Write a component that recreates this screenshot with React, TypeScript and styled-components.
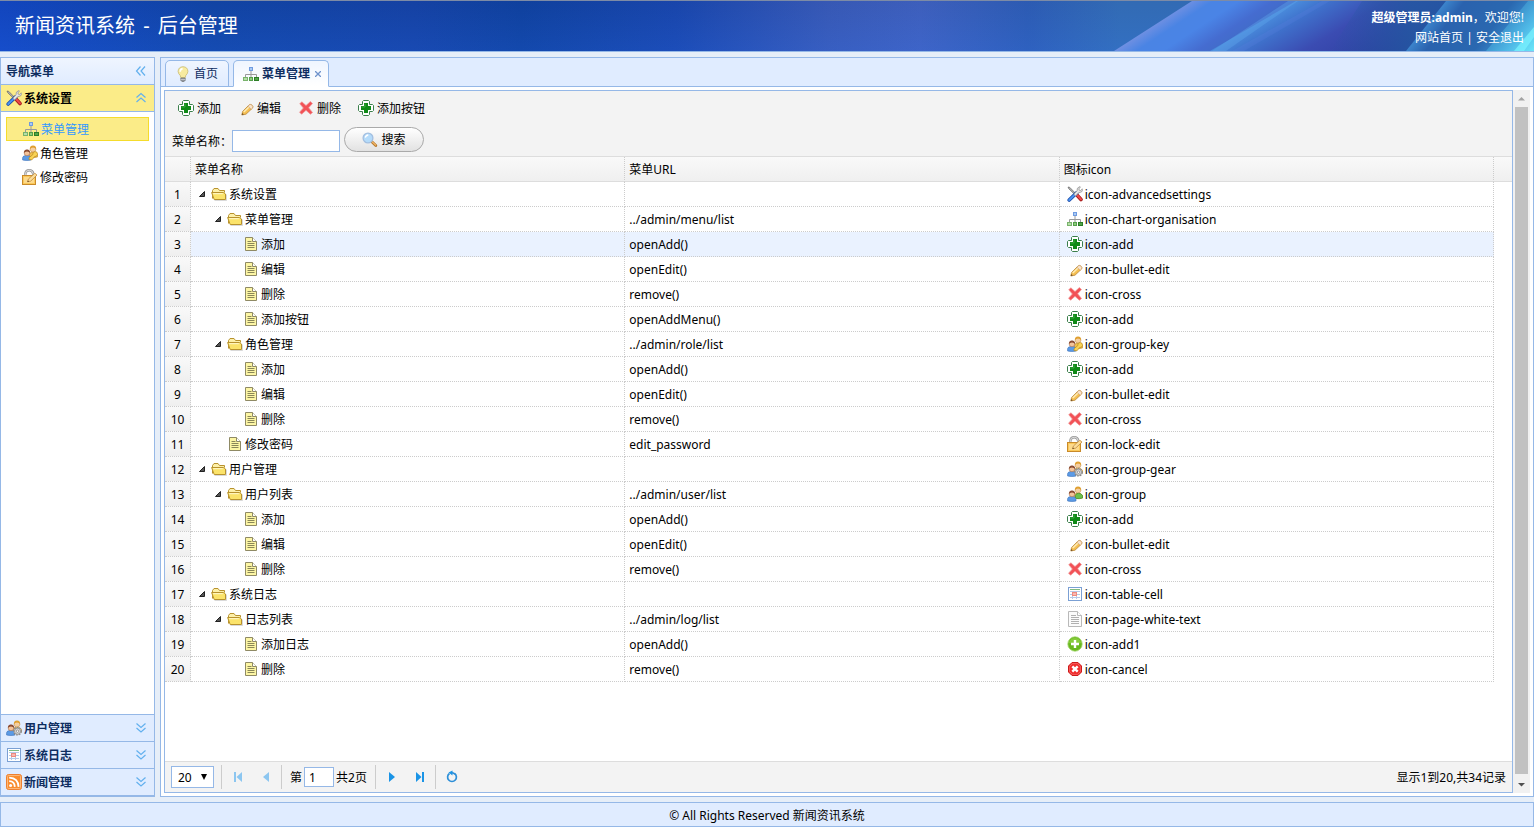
import React, { useState } from "react";
import styled, { createGlobalStyle, css } from "styled-components";

const LINE = "#95b8e7";
const NAVY = "#0e2d5f";

const GlobalStyle = createGlobalStyle`
  *, *::before, *::after { box-sizing: border-box; }
  body {
    margin: 0;
    background: #e6eef8;
    color: #000;
    font: 12px/21px "Noto Sans", "Noto Sans CJK SC", sans-serif;
  }
  button, input, select { font: inherit; color: inherit; }
`;

/* ---------- icons ---------- */

type IconName =
  | "tools" | "org" | "add" | "pencil" | "cross" | "groupKey" | "lockEdit"
  | "groupGear" | "group" | "table" | "page" | "add1" | "cancel" | "folder"
  | "file" | "bulb" | "search" | "rss";

const people = (
  <>
    <path d="M7.500 12.500V9.500Q7.500 7 11 7t4.500 2.500V12q-3 1-8 .5z" fill="#f0c04a" stroke="#c08a2c" strokeWidth=".6" />
    <circle cx="11" cy="4.300" r="2.800" fill="#f6cfa0" stroke="#b8823a" strokeWidth=".5" />
    <path d="M7.800 4.400Q7.600.7 11 .6q3.400.1 3.200 3.800-.9-1.900-3.200-1.900T7.800 4.400z" fill="#e0a030" />
    <path d="M.6 15V12.700Q.8 10.400 4.800 10.400t4.200 2.300V15Q5 16 .6 15z" fill="#5b9be6" stroke="#3a6fb8" strokeWidth=".6" />
    <circle cx="5" cy="8" r="2.800" fill="#f3c39a" stroke="#9a5a34" strokeWidth=".5" />
    <path d="M1.900 8Q1.700 4.500 5 4.400 8.300 4.500 8.100 8 7.200 6.400 5 6.400T1.900 8z" fill="#8a4b32" />
  </>
);

const pencil = (
  <>
    <path d="M3.800 15L4.600 11.400 11 5Q12.600 3.800 14 5.200T14.600 8L8 14.200z" fill="#f5bf52" stroke="#bd8a3c" strokeWidth=".8" />
    <path d="M5.800 12L11.800 6.200" stroke="#fdebb5" strokeWidth="1.500" />
    <path d="M11 5Q12.600 3.800 14 5.200T14.600 8L13.200 9.200 9.900 6.200z" fill="#f9e3cb" stroke="#c79c6a" strokeWidth=".6" />
    <path d="M3.800 15l.5-2 1.500 1.500z" fill="#6b4a24" />
  </>
);

const ART: Record<IconName, React.ReactNode> = {
  tools: (
    <>
      <path d="M9 8L14 13.500" stroke="#a81c1c" strokeWidth="3.600" strokeLinecap="round" />
      <path d="M9.200 8L14 13.300" stroke="#ee4a4a" strokeWidth="2" strokeLinecap="round" />
      <path d="M1 1l1.800.4L9 7.800 8 8.800 1.800 2.800z" fill="#b0b0b0" stroke="#555" strokeWidth=".6" />
      <path d="M9.600 6.900L2.200 14" stroke="#1c4cab" strokeWidth="3.600" strokeLinecap="round" />
      <path d="M7.800 8.600L2.200 14" stroke="#4a94f0" strokeWidth="2" strokeLinecap="round" />
      <path d="M6.800 8.200l3.200-3.400Q9.400 1.800 12.800.5l.6.4-1.500 2 .3 1.300 1.400.3 1.700-1.700.4.800Q15.400 6.800 11.800 6.600L8.700 9.900z" fill="#e6e6e6" stroke="#8a8a8a" strokeWidth=".7" />
    </>
  ),
  org: (
    <>
      <path d="M8 5V8M2.500 11V8.500H13.500V11M8 8V11" stroke="#9a9a9a" fill="none" />
      <rect x="6.500" y="1.500" width="3" height="3" fill="#a9caf5" stroke="#6f9be0" />
      <rect x=".5" y="11.500" width="4" height="3" fill="#b5dfa8" stroke="#79b36c" />
      <rect x="6.500" y="11.500" width="3" height="3" fill="#8ccb7c" stroke="#55a04a" />
      <rect x="11.500" y="11.500" width="4" height="3" fill="#52a548" stroke="#2c7d26" />
    </>
  ),
  add: (
    <>
      <path d="M5.500.5H10.500L11.500 1.500V4.500H14.500L15.500 5.500V10.500L14.500 11.500H11.500V14.500L10.500 15.500H5.500L4.500 14.500V11.500H1.500L.5 10.500V5.500L1.500 4.500H4.500V1.500z" fill="#fff" stroke="#3b7f4b" />
      <path d="M6 3H10V6H13V10H10V13H6V10H3V6H6z" fill="#0f8a17" />
      <path d="M7 3.500V7H3.500" stroke="#45b04a" fill="none" strokeWidth=".8" />
    </>
  ),
  pencil,
  cross: (
    <path d="M3.800 1.800L8 5.600 12.400 1.600 14.400 3.600 10.600 7.800 14.500 12.500 12.400 14.200 8 10.300 3.600 14.200 1.600 12.200 5.400 8 1.800 3.800z" fill="#f25257" stroke="#f08f8f" strokeWidth=".8" />
  ),
  groupKey: (
    <>
      {people}
      <path d="M7 14.600l.2-2 3.600-3q-.3-2.800 2.200-3.100 2.800.2 2.500 3-.5 2.300-3 2.100L10 14.800z" fill="#f9d355" stroke="#b98a1c" strokeWidth=".7" />
    </>
  ),
  group: (
    <>
      {people}
      <path d="M8.500 11.500V9.300Q9 7.300 11.500 7.300T15.500 9.500V12q-3 1-6 .5z" fill="#6cc04c" stroke="#3f8f2c" strokeWidth=".7" />
    </>
  ),
  groupGear: (
    <>
      {people}
      <circle cx="11.500" cy="11.200" r="3.700" fill="#d2d2d2" stroke="#8a8a8a" strokeWidth="1.400" strokeDasharray="1.700 1" />
      <circle cx="11.500" cy="11.200" r="3" fill="#dadada" stroke="#858585" strokeWidth=".7" />
      <circle cx="11.500" cy="11.200" r="1.200" fill="#fff" stroke="#777" strokeWidth=".7" />
    </>
  ),
  lockEdit: (
    <>
      <path d="M3.300 7V4.800Q3.600 1.200 7.200 1.200T11.200 4.800V7" fill="none" stroke="#9a9a9a" strokeWidth="2.400" />
      <path d="M3.300 7V4.800Q3.600 1.200 7.200 1.200T11.200 4.800V7" fill="none" stroke="#e0e0e0" strokeWidth="1" />
      <rect x=".5" y="6.500" width="13" height="9" fill="#fbc95a" stroke="#c98a2a" />
      <path d="M2 8h10v6H2z" fill="#fdda8c" />
      <path d="M5.600 12.800l.8-2.800L12.800 4.200l2.200 1.900-6.300 6z" fill="#fbdc98" stroke="#c08a3c" strokeWidth=".8" />
      <path d="M5.400 13l.5-1.500 1.200 1z" fill="#5a3a1a" />
    </>
  ),
  table: (
    <>
      <rect x="1.500" y="1.500" width="13" height="13" fill="#fff" stroke="#7ba0d4" />
      <path d="M3 3.500h10" stroke="#7fbb80" />
      <path d="M3 5.500h10M3 8.500h10M3 11.500h10M5.500 5v8M9.500 5v8" stroke="#b5c9e8" fill="none" />
      <rect x="5.500" y="6.500" width="4" height="3" fill="#f9b8b0" stroke="#ee8a80" />
    </>
  ),
  page: (
    <>
      <path d="M1.500.5H10.500L14.500 4.500V15.500H1.500z" fill="#fbfbfb" stroke="#b9b9b9" />
      <path d="M10.500.5V4.500H14.500" fill="#fff" stroke="#b9b9b9" />
      <path d="M4 4.500h5M4 6.500h8M4 8.500h8M4 10.500h8M4 12.500h8" stroke="#b0b0b0" />
    </>
  ),
  add1: (
    <>
      <circle cx="8" cy="8" r="7.200" fill="#68b81e" stroke="#a2d56c" strokeWidth=".8" />
      <path d="M1.800 7Q3 2 8 2t6.200 5Q8 9 1.800 7z" fill="#86cb3c" />
      <path d="M8 4v8M4 8h8" stroke="#fff" strokeWidth="2.400" />
    </>
  ),
  cancel: (
    <>
      <path d="M5 1.500h6L14.500 5v6L11 14.500H5L1.500 11V5z" fill="#f02c2c" stroke="#cc1a1a" />
      <path d="M5.400 2.600h5.200l2.800 2.800v5.200l-2.800 2.800H5.400L2.600 10.600V5.400z" fill="none" stroke="#f87c7c" strokeWidth=".6" />
      <path d="M5.300 5.300l5.400 5.400M10.700 5.300l-5.400 5.400" stroke="#fff" strokeWidth="2.400" />
    </>
  ),
  folder: (
    <>
      <path d="M1.500 12.500V4.500L3 2.500H7L8.500 4.500H13.500V6.500" fill="#fdf0a8" stroke="#b8922e" />
      <path d="M.6 6.500H12.500L14.500 8V13.500H3.200z" fill="#fbe36a" stroke="#b8922e" strokeLinejoin="round" />
      <path d="M2.200 7.700h9.600" stroke="#fff8cf" />
      <path d="M3.500 14.500H15.500V8.500" stroke="#c9c9c9" fill="none" strokeWidth=".7" />
    </>
  ),
  file: (
    <>
      <path d="M2.500 1.500H9.500L13.500 5.500V14.500H2.500z" fill="#fdf6a4" stroke="#8f8a65" />
      <path d="M9.500 1.500V5.500H13.500" fill="#fff" stroke="#8f8a65" />
      <path d="M4.500 5.500h4M4.500 7.500h7M4.500 9.500h7M4.500 11.500h7" stroke="#8a8758" />
    </>
  ),
  bulb: (
    <>
      <path d="M8 .7Q12.800 1 12.900 5.500 12.700 7.800 10.800 9.400L10.300 11.500H5.700L5.200 9.400Q3.300 7.800 3.100 5.500 3.200 1 8 .7z" fill="#f7eba0" stroke="#c9bb72" strokeWidth=".8" />
      <path d="M5.200 5.800Q5.200 3 7.600 2.600" stroke="#fff" strokeWidth="1.600" fill="none" />
      <path d="M5.800 12h4.400v2.400l-1.200 1.200H7l-1.200-1.200z" fill="#8f949c" stroke="#666" strokeWidth=".6" />
      <path d="M5.800 13.400h4.400" stroke="#e4e4e4" strokeWidth=".7" />
    </>
  ),
  search: (
    <>
      <path d="M9.600 9.600L13.800 13.600" stroke="#b5772c" strokeWidth="2.800" strokeLinecap="round" />
      <path d="M10.400 10L13.600 13" stroke="#f0b566" strokeWidth="1.300" strokeLinecap="round" />
      <circle cx="6" cy="6" r="4.900" fill="#b4dbfa" stroke="#a3bfe0" strokeWidth="1.300" />
      <path d="M3.300 5.600Q3.700 3.300 6.300 3" stroke="#fff" strokeWidth="1.300" fill="none" />
    </>
  ),
  rss: (
    <>
      <rect x=".5" y=".5" width="15" height="15" rx="2" fill="#f98c2e" stroke="#ee8030" />
      <rect x="1.500" y="1.500" width="13" height="13" rx="1" fill="none" stroke="#fdb878" />
      <circle cx="4.600" cy="11.500" r="1.500" fill="#fff" />
      <path d="M3.200 7.200Q8.600 7.300 8.800 12.900M3.200 3.600Q12.300 4 12.600 12.900" stroke="#fff" strokeWidth="1.800" fill="none" />
    </>
  ),
};

const IconSvg = styled.svg`
  flex: none;
  width: 16px;
  height: 16px;
  display: block;
`;

const Icon = ({ name }: { name: IconName }) => (
  <IconSvg viewBox="0 0 16 16" aria-hidden="true">{ART[name]}</IconSvg>
);

const Chevrons = ({ dir }: { dir: "left" | "up" | "down" }) => (
  <IconSvg viewBox="0 0 16 16" aria-hidden="true" fill="none" stroke="#62b0ee" strokeWidth="1.200">
    {dir === "left" && <path d="M7.500 3.500L3.500 8 7.500 12.500M12 3.500L8 8 12 12.500" />}
    {dir === "up" && <path d="M3.500 7.500L8 3.500 12.500 7.500M3.500 12L8 8 12.500 12" />}
    {dir === "down" && <path d="M3.500 3.500L8 7.500 12.500 3.500M3.500 8L8 12 12.500 8" />}
  </IconSvg>
);

const PagerGlyph = ({ name, off }: { name: "first" | "prev" | "next" | "last" | "reload"; off?: boolean }) => {
  const c = off ? "#8cc6f0" : "#1a94e6";
  return (
    <IconSvg viewBox="0 0 16 16" aria-hidden="true" fill={c}>
      {name === "first" && <path d="M4 3h2v10H4zM12 3v10L6.500 8z" />}
      {name === "prev" && <path d="M11 3v10L5 8z" />}
      {name === "next" && <path d="M5 3v10l6-5z" />}
      {name === "last" && <path d="M10 3h2v10h-2zM4 3v10l5.500-5z" />}
      {name === "reload" && (
        <>
          <path d="M5.500 4.500A4.400 4.400 0 1 0 10.500 4.500" fill="none" stroke="#2d8fd8" strokeWidth="1.700" />
          <path d="M8.500 1.500L8.500 6.500 4.500 3.500z" />
          <path d="M8 3.500L11 5" stroke="#2d8fd8" strokeWidth="1.600" />
        </>
      )}
    </IconSvg>
  );
};

/* ---------- page frame ---------- */

const Page = styled.div`
  min-height: 100vh;
  display: flex;
  flex-direction: column;
  gap: 5px;
`;

const Banner = styled.header`
  position: relative;
  height: 52px;
  overflow: hidden;
  display: flex;
  justify-content: space-between;
  color: #fff;
  border-top: 1px solid #7d8ba6;
  border-bottom: 1px solid ${LINE};
  background:
    linear-gradient(to bottom, rgba(0, 20, 110, 0.06), rgba(40, 110, 255, 0.14)),
    linear-gradient(to right, #1348c2 0, #1246a6 14%, #1644a6 27%, #1043a0 34%, #1a48ae 44%, #3a5cb8 54%, #4163c0 60%, #2f5fb6 67%, #3570b8 73%);
`;

const BannerArt = styled.svg`
  position: absolute;
  top: 0;
  right: 0;
  width: 434px;
  height: 50px;
`;

const Title = styled.h1`
  position: relative;
  margin: 0;
  padding-left: 15px;
  font-size: 20px;
  line-height: 50px;
  font-weight: 400;
`;

const Dash = styled.span`
  padding: 0 3px;
`;

const Account = styled.div`
  position: relative;
  padding: 7px 10px 0 0;
  text-align: right;
  line-height: 20px;
`;

const BannerLink = styled.a`
  color: #fff;
  text-decoration: none;
`;

const Body = styled.div`
  flex: 1;
  display: flex;
  gap: 5px;
`;

const Footer = styled.footer`
  height: 25px;
  line-height: 25px;
  text-align: center;
  border: 1px solid ${LINE};
  background: #e0ecff;
`;

/* ---------- navigation ---------- */

const Side = styled.nav`
  flex: none;
  width: 155px;
  display: flex;
  flex-direction: column;
  border: 1px solid ${LINE};
  background: #fff;
`;

const SideTitle = styled.div`
  height: 27px;
  padding: 0 5px;
  display: flex;
  align-items: center;
  justify-content: space-between;
  font-weight: 700;
  color: ${NAVY};
  border-bottom: 1px solid ${LINE};
  background: linear-gradient(to bottom, #eff5ff, #e0ecff);
`;

const GroupButton = styled.button<{ $open?: boolean }>`
  height: 27px;
  padding: 0 5px;
  display: flex;
  align-items: center;
  gap: 2px;
  font-weight: 700;
  text-align: left;
  color: ${(p) => (p.$open ? "#000" : NAVY)};
  border: 0;
  border-bottom: 1px solid ${LINE};
  background: ${(p) => (p.$open ? "#fbec88" : "#e0ecff")};
  cursor: pointer;
`;

const GroupLabel = styled.span`
  flex: 1;
`;

const IconButton = styled.button`
  padding: 0;
  border: 0;
  background: none;
  cursor: pointer;
`;

const NavList = styled.ul`
  flex: 1;
  margin: 0;
  padding: 5px 5px 0;
  list-style: none;
  border-bottom: 1px solid ${LINE};
`;

const NavItem = styled.a<{ $on: boolean }>`
  height: 24px;
  padding-left: 16px;
  display: flex;
  align-items: center;
  gap: 2px;
  color: #000;
  text-decoration: none;
  ${(p) => p.$on && css`
    color: #3399ff;
    border: 1px solid #f5dc2c;
    background: #fbec88;
  `}
`;

/* ---------- tabs ---------- */

const Center = styled.main`
  flex: 1;
  min-width: 0;
  display: flex;
  flex-direction: column;
  border: 1px solid ${LINE};
  background: #fff;
`;

const TabBar = styled.div`
  height: 29px;
  padding-left: 4px;
  display: flex;
  align-items: flex-end;
  gap: 4px;
  background: #e0ecff;
  box-shadow: inset 0 -1px ${LINE};
`;

const Tab = styled.div<{ $on?: boolean }>`
  height: 27px;
  display: flex;
  align-items: center;
  border: 1px solid ${LINE};
  border-bottom-color: ${(p) => (p.$on ? "#fff" : LINE)};
  border-radius: 5px 5px 0 0;
  color: ${NAVY};
  font-weight: ${(p) => (p.$on ? 700 : 400)};
  background: ${(p) => (p.$on ? "linear-gradient(to bottom, #eff5ff, #fff)" : "linear-gradient(to bottom, #eff5ff, #e0ecff)")};
  padding: 0 ${(p) => (p.$on ? 4 : 10)}px 0 9px;
`;

const TabButton = styled.button`
  display: flex;
  align-items: center;
  gap: 3px;
  padding: 0;
  border: 0;
  background: none;
  cursor: pointer;
`;

const TabClose = styled(IconButton)`
  width: 12px;
  height: 16px;
  margin-left: 2px;
  display: flex;
  align-items: center;
  justify-content: center;
`;

const TabBody = styled.div`
  flex: 1;
  display: flex;
  padding: 3px;
`;

const ScrollTrack = styled.div`
  flex: none;
  width: 17px;
  display: flex;
  flex-direction: column;
  align-items: center;
  background: #f1f1f1;
`;

const ScrollArrow = styled.svg`
  width: 17px;
  height: 17px;
`;

const ScrollThumb = styled.div`
  flex: 1;
  width: 13px;
  margin-bottom: 2px;
  background: #c1c1c1;
`;

/* ---------- grid panel ---------- */

const Panel = styled.section`
  flex: 1;
  min-width: 0;
  display: flex;
  flex-direction: column;
  border: 1px solid ${LINE};
`;

const Toolbar = styled.div`
  padding: 5px 5px 4px;
  border-bottom: 1px solid #ddd;
  background: #f3f3f3;
`;

const ToolRow = styled.div`
  display: flex;
  gap: 1px;
  margin-bottom: 7px;
`;

const ToolButton = styled.button`
  height: 24px;
  padding: 0 8px;
  display: flex;
  align-items: center;
  gap: 3px;
  border: 0;
  background: none;
  cursor: pointer;
`;

const SearchForm = styled.form`
  display: flex;
  align-items: center;
  height: 25px;
  padding-left: 2px;
`;

const SearchLabel = styled.label`
  width: 60px;
  padding-top: 3px;
  white-space: nowrap;
`;

const SearchBox = styled.input`
  width: 108px;
  height: 22px;
  margin: 3px 4px 0 0;
  padding: 0 4px;
  border: 1px solid ${LINE};
  background: #fff;
`;

const SearchButton = styled.button`
  width: 80px;
  height: 25px;
  display: flex;
  align-items: center;
  justify-content: center;
  gap: 3px;
  padding: 0;
  border: 1px solid #aaa;
  border-radius: 13px;
  background: linear-gradient(to bottom, #fff, #e2e2e2);
  cursor: pointer;
`;

const GridArea = styled.div`
  flex: 1;
  padding-right: 18px;
  background:
    linear-gradient(#ddd, #ddd) 0 24px / 100% 1px no-repeat,
    linear-gradient(to bottom, #f9f9f9, #efefef) 0 0 / 100% 25px no-repeat,
    #fff;
`;

const Grid = styled.table`
  width: 100%;
  table-layout: fixed;
  border-collapse: separate;
  border-spacing: 0;
`;

const NumberCol = styled.col`
  width: 26px;
`;

const HeadCell = styled.th`
  height: 25px;
  padding: 0 4px;
  text-align: left;
  font-weight: 400;
  border-right: 1px dotted #ccc;
  border-bottom: 1px solid #ddd;
`;

const Row = styled.tr<{ $hover: boolean }>`
  background: ${(p) => (p.$hover ? "#eaf2ff" : "#fff")};
`;

const Cell = styled.td`
  height: 25px;
  padding: 0 4px;
  border-right: 1px dotted #ccc;
  border-bottom: 1px dotted #ccc;
`;

const NumberCell = styled(Cell)`
  padding: 0;
  text-align: center;
  background: linear-gradient(to bottom, #f9f9f9, #efefef);
`;

const TreeCell = styled.div<{ $depth: number }>`
  display: flex;
  align-items: center;
  gap: 2px;
  padding-left: ${(p) => p.$depth * 16}px;
`;

const Twisty = styled.svg`
  flex: none;
  width: 14px;
  height: 16px;
`;

const IconCell = styled.div`
  display: flex;
  align-items: center;
  gap: 2px;
  padding-left: 3px;
`;

/* ---------- pager ---------- */

const Pager = styled.div`
  height: 31px;
  padding: 0 6px;
  display: flex;
  align-items: center;
  border-top: 1px solid #ddd;
  background: #f3f3f3;
`;

const SelectWrap = styled.span`
  position: relative;
  margin-right: 6px;
`;

const SizeSelect = styled.select`
  display: block;
  appearance: none;
  width: 43px;
  height: 22px;
  padding: 0 0 0 6px;
  border: 1px solid ${LINE};
  border-radius: 0;
  background: #fff;
`;

const SelectArrow = styled.svg`
  position: absolute;
  right: 6px;
  top: 7px;
  width: 8px;
  height: 8px;
  pointer-events: none;
`;

const Divider = styled.span`
  width: 1px;
  height: 24px;
  margin: 0 2px 0 1px;
  background: #ccc;
`;

const PageButton = styled.button`
  width: 28px;
  height: 24px;
  padding: 0 6px;
  border: 0;
  background: none;
  cursor: pointer;
`;

const PageLabel = styled.label`
  display: flex;
  align-items: center;
  padding: 0 7px 0 6px;
`;

const PageInput = styled.input`
  width: 30px;
  height: 20px;
  margin: 0 2px;
  padding: 0 4px;
  border: 1px solid ${LINE};
  background: #fff;
`;

const Summary = styled.span`
  margin-left: auto;
`;

/* ---------- data ---------- */

type Entry = [depth: number, name: string, url: string, icon: IconName, iconText: string, branch?: boolean];

const ROWS: Entry[] = [
  [0, "系统设置", "", "tools", "icon-advancedsettings", true],
  [1, "菜单管理", "../admin/menu/list", "org", "icon-chart-organisation", true],
  [2, "添加", "openAdd()", "add", "icon-add"],
  [2, "编辑", "openEdit()", "pencil", "icon-bullet-edit"],
  [2, "删除", "remove()", "cross", "icon-cross"],
  [2, "添加按钮", "openAddMenu()", "add", "icon-add"],
  [1, "角色管理", "../admin/role/list", "groupKey", "icon-group-key", true],
  [2, "添加", "openAdd()", "add", "icon-add"],
  [2, "编辑", "openEdit()", "pencil", "icon-bullet-edit"],
  [2, "删除", "remove()", "cross", "icon-cross"],
  [1, "修改密码", "edit_password", "lockEdit", "icon-lock-edit"],
  [0, "用户管理", "", "groupGear", "icon-group-gear", true],
  [1, "用户列表", "../admin/user/list", "group", "icon-group", true],
  [2, "添加", "openAdd()", "add", "icon-add"],
  [2, "编辑", "openEdit()", "pencil", "icon-bullet-edit"],
  [2, "删除", "remove()", "cross", "icon-cross"],
  [0, "系统日志", "", "table", "icon-table-cell", true],
  [1, "日志列表", "../admin/log/list", "page", "icon-page-white-text", true],
  [2, "添加日志", "openAdd()", "add1", "icon-add1"],
  [2, "删除", "remove()", "cancel", "icon-cancel"],
];

const NAV: [string, IconName][] = [["菜单管理", "org"], ["角色管理", "groupKey"], ["修改密码", "lockEdit"]];
const GROUPS: [string, IconName][] = [["用户管理", "groupGear"], ["系统日志", "table"], ["新闻管理", "rss"]];
const TOOLS: [string, IconName][] = [["添加", "add"], ["编辑", "pencil"], ["删除", "cross"], ["添加按钮", "add"]];

const Beams = () => (
  <BannerArt viewBox="0 0 434 50" preserveAspectRatio="none" aria-hidden="true">
    <defs>
      <linearGradient id="b1" gradientUnits="userSpaceOnUse" x1="53" y1="25" x2="118" y2="124">
        <stop offset="0" stopColor="#6d8fe2" />
        <stop offset=".1" stopColor="#4a84e4" />
        <stop offset=".22" stopColor="#4a84e6" />
        <stop offset=".38" stopColor="#456cd0" />
        <stop offset=".6" stopColor="#3c6cc0" />
        <stop offset="1" stopColor="#3a78cc" />
      </linearGradient>
      <linearGradient id="b2" gradientUnits="userSpaceOnUse" x1="153" y1="25" x2="220" y2="140">
        <stop offset="0" stopColor="#4a8cdc" />
        <stop offset=".12" stopColor="#3f72cc" />
        <stop offset=".35" stopColor="#3b4cb2" />
        <stop offset=".7" stopColor="#2c3c9e" />
        <stop offset="1" stopColor="#2350a0" />
      </linearGradient>
      <linearGradient id="b3" gradientUnits="userSpaceOnUse" x1="326" y1="25" x2="385" y2="72">
        <stop offset="0" stopColor="#3c84cc" />
        <stop offset=".2" stopColor="#2a62ae" />
        <stop offset=".7" stopColor="#2a68b0" />
        <stop offset="1" stopColor="#3a8fd0" />
      </linearGradient>
      <linearGradient id="b4" gradientUnits="userSpaceOnUse" x1="395" y1="15" x2="434" y2="50">
        <stop offset="0" stopColor="#2f76ba" />
        <stop offset=".6" stopColor="#4fb8e6" />
        <stop offset="1" stopColor="#6ae8fa" />
      </linearGradient>
      <linearGradient id="b5" x1="0" x2="1">
        <stop offset="0" stopColor="#2458a2" stopOpacity="0" />
        <stop offset=".4" stopColor="#2458a2" stopOpacity=".85" />
      </linearGradient>
    </defs>
    <path d="M14 50L92 0H434V50z" fill="url(#b1)" />
    <path d="M110 50L196 0H434V50z" fill="url(#b2)" />
    <path d="M112 50L188 0h10L126 50z" fill="#5fa6ea" opacity=".4" />
    <path d="M132 50L222 0h8L144 50z" fill="#5a7fe0" opacity=".25" />
    <path d="M230 50L262 0H434V50z" fill="url(#b5)" />
    <path d="M306 50L346 0H434V50z" fill="url(#b3)" />
    <path d="M386 50L428 0h6V50z" fill="url(#b4)" />
    <path d="M414 50L434 26v10L424 50z" fill="#7af4ff" opacity=".7" />
  </BannerArt>
);

export default function App() {
  const [nav, setNav] = useState(0);
  const [hover, setHover] = useState(2);

  return (
    <>
      <GlobalStyle />
      <Page>
        <Banner>
          <Beams />
          <Title>新闻资讯系统 <Dash>-</Dash> 后台管理</Title>
          <Account>
            <div><strong>超级管理员:admin</strong>，欢迎您!</div>
            <div><BannerLink href="#home">网站首页</BannerLink> | <BannerLink href="#logout">安全退出</BannerLink></div>
          </Account>
        </Banner>

        <Body>
          <Side>
            <SideTitle>
              导航菜单
              <IconButton aria-label="收起"><Chevrons dir="left" /></IconButton>
            </SideTitle>
            <GroupButton $open aria-expanded="true">
              <Icon name="tools" /><GroupLabel>系统设置</GroupLabel><Chevrons dir="up" />
            </GroupButton>
            <NavList>
              {NAV.map(([label, icon], i) => (
                <li key={label}>
                  <NavItem href="#nav" $on={i === nav} onClick={() => setNav(i)}>
                    <Icon name={icon} />{label}
                  </NavItem>
                </li>
              ))}
            </NavList>
            {GROUPS.map(([label, icon]) => (
              <GroupButton key={label} aria-expanded="false">
                <Icon name={icon} /><GroupLabel>{label}</GroupLabel><Chevrons dir="down" />
              </GroupButton>
            ))}
          </Side>

          <Center>
            <TabBar>
              <Tab><TabButton><Icon name="bulb" />首页</TabButton></Tab>
              <Tab $on>
                <TabButton><Icon name="org" />菜单管理</TabButton>
                <TabClose aria-label="关闭">
                  <svg width="6" height="6" viewBox="0 0 6 6" stroke="#6f93cc" strokeWidth="1.300"><path d="M0 0L6 6M6 0L0 6" /></svg>
                </TabClose>
              </Tab>
            </TabBar>
            <TabBody>
              <Panel>
                <Toolbar>
                  <ToolRow>
                    {TOOLS.map(([label, icon]) => (
                      <ToolButton key={label}><Icon name={icon} />{label}</ToolButton>
                    ))}
                  </ToolRow>
                  <SearchForm onSubmit={(e) => e.preventDefault()}>
                    <SearchLabel htmlFor="menu-name">菜单名称：</SearchLabel>
                    <SearchBox id="menu-name" />
                    <SearchButton><Icon name="search" />搜索</SearchButton>
                  </SearchForm>
                </Toolbar>

                <GridArea>
                  <Grid>
                    <colgroup><NumberCol /><col /><col /><col /></colgroup>
                    <thead>
                      <tr>
                        <HeadCell />
                        <HeadCell>菜单名称</HeadCell>
                        <HeadCell>菜单URL</HeadCell>
                        <HeadCell>图标icon</HeadCell>
                      </tr>
                    </thead>
                    <tbody>
                      {ROWS.map(([depth, name, url, icon, iconText, branch], i) => (
                        <Row key={i} $hover={i === hover} onMouseEnter={() => setHover(i)}>
                          <NumberCell>{i + 1}</NumberCell>
                          <Cell>
                            <TreeCell $depth={depth}>
                              <Twisty viewBox="0 0 14 16" aria-hidden="true">
                                {branch && <path d="M4.500 10.500H9.500V5.500z" fill="#555" stroke="#222" />}
                              </Twisty>
                              <Icon name={branch ? "folder" : "file"} />
                              {name}
                            </TreeCell>
                          </Cell>
                          <Cell>{url}</Cell>
                          <Cell><IconCell><Icon name={icon} />{iconText}</IconCell></Cell>
                        </Row>
                      ))}
                    </tbody>
                  </Grid>
                </GridArea>

                <Pager>
                  <SelectWrap>
                    <SizeSelect aria-label="每页条数" defaultValue="20">
                      <option>20</option>
                      <option>50</option>
                    </SizeSelect>
                    <SelectArrow viewBox="0 0 8 8" aria-hidden="true"><path d="M1 1h6L4 7z" /></SelectArrow>
                  </SelectWrap>
                  <Divider />
                  <PageButton aria-label="首页" disabled><PagerGlyph name="first" off /></PageButton>
                  <PageButton aria-label="上一页" disabled><PagerGlyph name="prev" off /></PageButton>
                  <Divider />
                  <PageLabel>第<PageInput defaultValue="1" />共2页</PageLabel>
                  <Divider />
                  <PageButton aria-label="下一页"><PagerGlyph name="next" /></PageButton>
                  <PageButton aria-label="末页"><PagerGlyph name="last" /></PageButton>
                  <Divider />
                  <PageButton aria-label="刷新"><PagerGlyph name="reload" /></PageButton>
                  <Summary>显示1到20,共34记录</Summary>
                </Pager>
              </Panel>
              <ScrollTrack aria-hidden="true">
                <ScrollArrow viewBox="0 0 17 17"><path d="M5 10.500L8.500 7 12 10.500z" fill="#a3a3a3" /></ScrollArrow>
                <ScrollThumb />
                <ScrollArrow viewBox="0 0 17 17"><path d="M5 7L8.500 10.500 12 7z" fill="#505050" /></ScrollArrow>
              </ScrollTrack>
            </TabBody>
          </Center>
        </Body>

        <Footer>© All Rights Reserved 新闻资讯系统</Footer>
      </Page>
    </>
  );
}
